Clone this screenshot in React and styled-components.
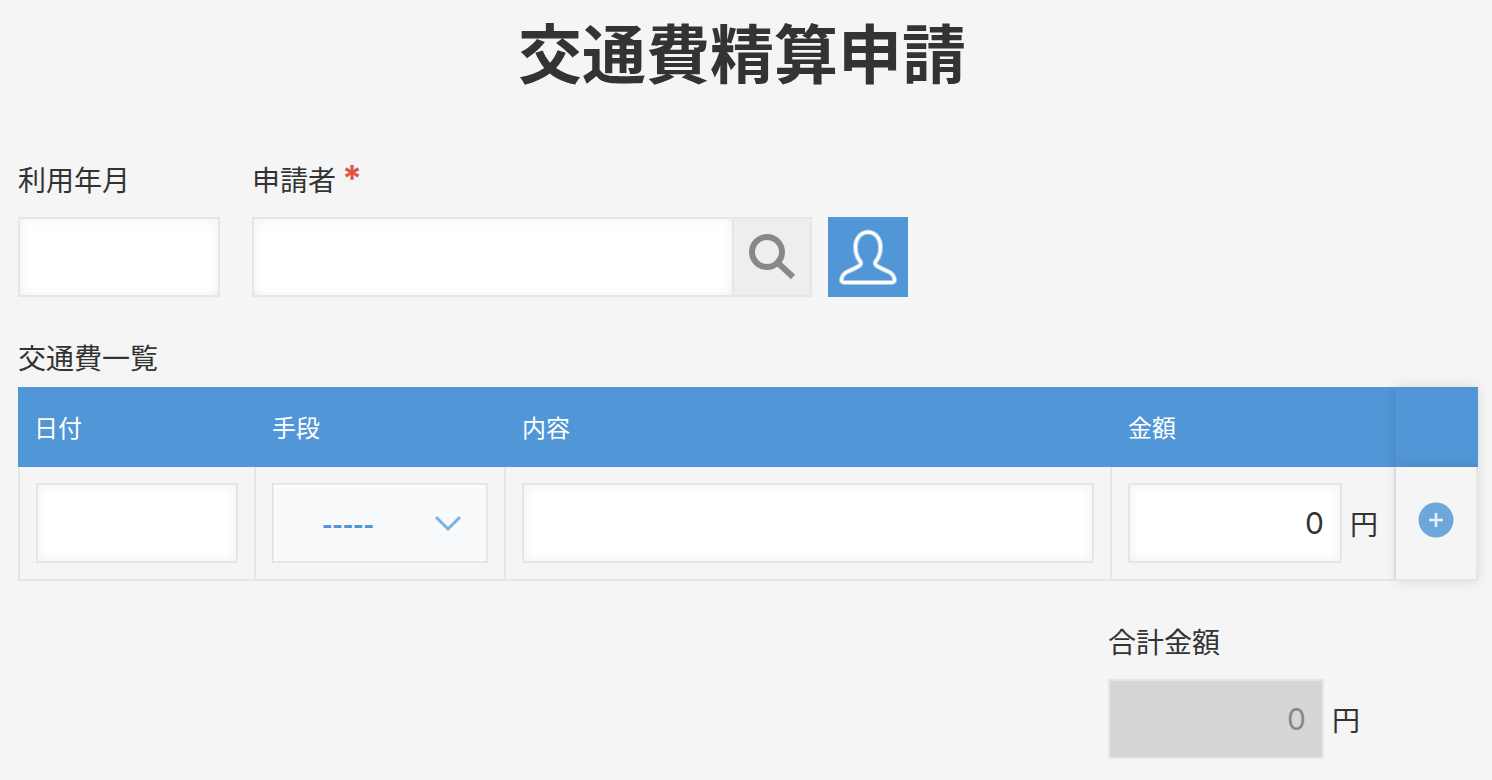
import React, { useState } from 'react';
import styled, { createGlobalStyle } from 'styled-components';

const GlobalStyle = createGlobalStyle`
  *, *::before, *::after {
    box-sizing: border-box;
  }

  body {
    margin: 0;
    background-color: #f5f5f5;
    color: #333;
    font-family: 'Noto Sans CJK JP', sans-serif;
    font-size: 28px;
    line-height: 40px;
  }
`

const Page = styled.main`
  display: flex;
  flex-direction: column;
  gap: 40px;
  padding: 0 14px 20px 18px;
`

const Title = styled.h1`
  margin: 0;
  padding: 0 12px 18px 0;
  font-size: 64px;
  font-weight: bold;
  line-height: 101px;
  text-align: center;
`

const Fields = styled.div`
  display: flex;
  align-items: flex-start;
  gap: 32px;
`

const Field = styled.div`
  display: flex;
  flex-direction: column;
  gap: 18px;
  width: ${props => props.$width};
`

const Label = styled.label`
  display: block;
  height: 40px;
`

const Required = styled.span`
  margin-left: 6px;
  color: #dd5544;
  font-family: Inter, sans-serif;
  font-size: 36px;
  font-weight: bold;
  line-height: 1;
`

const Controls = styled.div`
  display: flex;
  align-items: center;
  gap: ${props => props.$gap || '8px'};
`

const Input = styled.input`
  flex: 1;
  width: 100%;
  min-width: 0;
  height: 80px;
  padding: 0 16px;
  border: 2px solid #e3e7e6;
  border-radius: 0;
  outline: none;
  background-color: ${props => (props.disabled ? '#d5d7d6' : '#fff')};
  box-shadow: ${props => (props.disabled ? 'none' : 'inset 0 0 12px #f0f0f0')};
  color: ${props => (props.disabled ? '#888' : '#333')};
  font-family: Inter, 'Noto Sans CJK JP', sans-serif;
  font-size: 30px;
  text-align: ${props => (props.$number ? 'right' : 'left')};
`

const CellInput = styled(Input)`
  display: block;
`

const SearchBox = styled.div`
  display: flex;
  width: 560px;

  ${Input} {
    border-right: none;
  }
`

const IconButton = styled.button`
  display: flex;
  flex: none;
  align-items: center;
  justify-content: center;
  width: 80px;
  height: 80px;
  padding: 0;
  border: ${props => (props.$primary ? 'none' : '2px solid #e3e7e6')};
  background-color: ${props => (props.$primary ? '#5196d6' : '#eee')};
  cursor: pointer;
`

const List = styled.section`
  display: flex;
  flex-direction: column;
  gap: 10px;
`

const ListTitle = styled.h2`
  margin: 0;
  font-size: 28px;
  font-weight: normal;
`

const Table = styled.table`
  width: 100%;
  table-layout: fixed;
  border-collapse: separate;
  border-spacing: 0;
`

const Col = styled.col`
  width: ${props => props.$width};
`

const Th = styled.th`
  height: 80px;
  padding: 0 16px;
  background-color: #5196d6;
  color: #fff;
  font-size: 24px;
  font-weight: normal;
  text-align: left;

  &:last-child {
    box-shadow: 0 0 12px rgba(0, 0, 0, 0.12);
  }
`

const Td = styled.td`
  padding: 16px;
  border: solid #e3e7e6;
  border-width: 0 2px 2px 0;

  &:first-child {
    border-left-width: 2px;
  }

  &:last-child {
    padding: 0 0 6px;
    background-color: #f5f5f5;
    box-shadow: 0 0 12px rgba(0, 0, 0, 0.12);
  }
`

const SelectBox = styled.div`
  position: relative;

  svg {
    position: absolute;
    top: 30px;
    right: 27px;
    pointer-events: none;
  }
`

const Select = styled.select`
  display: block;
  width: 100%;
  height: 80px;
  padding: 0 48px;
  border: 2px solid #e3e7e6;
  border-radius: 0;
  outline: none;
  appearance: none;
  background-color: #f7f9fb;
  box-shadow: inset 2px 2px 0 #fff;
  color: #5196d6;
  font-family: 'Noto Sans CJK JP', sans-serif;
  font-size: 28px;
  font-weight: bold;
`

const AddButton = styled.button`
  display: block;
  width: 36px;
  height: 36px;
  margin: 0 auto;
  padding: 0;
  border: none;
  background: none;
  cursor: pointer;

  svg {
    display: block;
  }
`

const Amount = styled(Controls)`
  width: ${props => props.$width};
`

const Total = styled.div`
  display: flex;
  justify-content: flex-end;
`

const SearchIcon = () => (
  <svg width="48" height="48" viewBox="0 0 48 48" fill="none" stroke="#888" strokeWidth="6">
    <circle cx="19" cy="19" r="15" />
    <path d="M29.500 29.500 45 44" />
  </svg>
)

const userOutline =
  'M30 5C22 5.500 17.500 12 17.500 20c0 7 1.500 10.500 4.500 14 1.500 2 1 3.500-1 5-3 2-6 3-10 5-5 2-7 4-7.500 8.500-.2 2 1 3 3 3h47c2 0 3.200-1 3-3-.5-4.500-2.500-6.500-7.500-8.500-4-2-7-3-10-5-2-1.500-2.500-3-1-5 3-3.500 4.500-7 4.500-14C42.500 12 38 5.500 30 5Z'

const UserIcon = () => (
  <svg width="60" height="60" viewBox="0 0 60 60" fill="none" strokeLinejoin="round">
    <path d={userOutline} stroke="#a8caea" strokeWidth="5" />
    <path d={userOutline} stroke="#fff" strokeWidth="3" />
  </svg>
)

const ChevronIcon = () => (
  <svg width="26" height="20" viewBox="0 0 26 20" fill="none" stroke="#7db3e2" strokeWidth="3">
    <path d="M1 4 13 16 25 4" />
  </svg>
)

const PlusIcon = () => (
  <svg width="36" height="36" viewBox="0 0 36 36">
    <circle cx="18" cy="18" r="17.500" fill="#6ea7dc" />
    <path d="M18 11v14M11 18h14" stroke="#e8f1fa" strokeWidth="2.500" />
  </svg>
)

const newRow = id => ({ id, date: '', method: '', detail: '', amount: '0' })

const ExpenseRow = ({ row, onChange, onAdd }) => {
  const set = name => e => onChange({ ...row, [name]: e.target.value })

  return (
    <tr>
      <Td><CellInput aria-labelledby="col-date" value={row.date} onChange={set('date')} /></Td>
      <Td>
        <SelectBox>
          <Select aria-labelledby="col-method" value={row.method} onChange={set('method')}>
            <option value="">-----</option>
          </Select>
          <ChevronIcon />
        </SelectBox>
      </Td>
      <Td><CellInput aria-labelledby="col-detail" value={row.detail} onChange={set('detail')} /></Td>
      <Td>
        <Amount $width="250px">
          <Input $number inputMode="numeric" aria-labelledby="col-amount" value={row.amount} onChange={set('amount')} />
          <span>円</span>
        </Amount>
      </Td>
      <Td>
        <AddButton type="button" aria-label="行を追加" onClick={onAdd}><PlusIcon /></AddButton>
      </Td>
    </tr>
  )
}

const App = () => {
  const [rows, setRows] = useState([newRow(1)])
  const total = rows.reduce((sum, row) => sum + (Number(row.amount) || 0), 0)

  const changeRow = next => setRows(rows.map(row => (row.id === next.id ? next : row)))
  const addRow = () => setRows([...rows, newRow(rows.length + 1)])

  return (
    <>
      <GlobalStyle />
      <Page>
        <Title>交通費精算申請</Title>

        <Fields>
          <Field $width="202px">
            <Label htmlFor="month">利用年月</Label>
            <Controls><Input id="month" /></Controls>
          </Field>
          <Field>
            <Label htmlFor="applicant">申請者<Required>*</Required></Label>
            <Controls $gap="16px">
              <SearchBox>
                <Input id="applicant" required />
                <IconButton type="button" aria-label="検索"><SearchIcon /></IconButton>
              </SearchBox>
              <IconButton $primary type="button" aria-label="ユーザーを選択"><UserIcon /></IconButton>
            </Controls>
          </Field>
        </Fields>

        <List>
          <ListTitle>交通費一覧</ListTitle>
          <Table>
            <colgroup>
              <Col $width="238px" />
              <Col $width="250px" />
              <Col />
              <Col $width="284px" />
              <Col $width="82px" />
            </colgroup>
            <thead>
              <tr>
                <Th id="col-date">日付</Th>
                <Th id="col-method">手段</Th>
                <Th id="col-detail">内容</Th>
                <Th id="col-amount">金額</Th>
                <Th />
              </tr>
            </thead>
            <tbody>
              {rows.map(row => (
                <ExpenseRow key={row.id} row={row} onChange={changeRow} onAdd={addRow} />
              ))}
            </tbody>
          </Table>
        </List>

        <Total>
          <Field $width="370px">
            <Label htmlFor="total">合計金額</Label>
            <Amount $width="252px">
              <Input id="total" $number disabled value={total} />
              <span>円</span>
            </Amount>
          </Field>
        </Total>
      </Page>
    </>
  )
}

export default App;
